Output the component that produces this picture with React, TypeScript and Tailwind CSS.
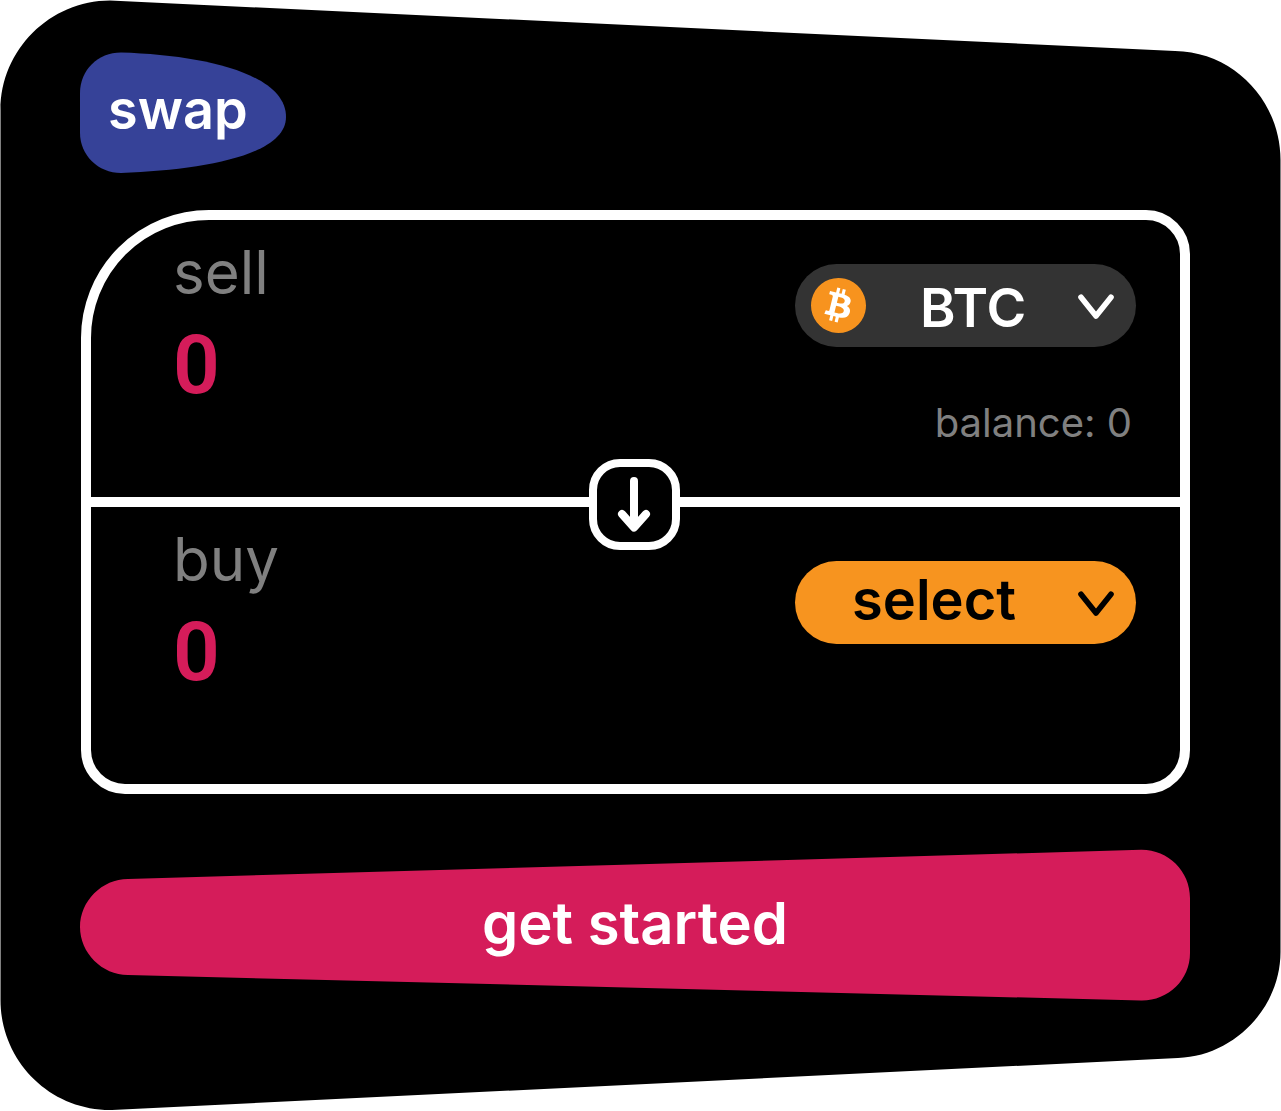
import { useState } from "react";
import type { ReactNode } from "react";
import { SiBitcoin } from "react-icons/si";

function Shape({ viewBox, d, className }: { viewBox: string; d: string; className: string }) {
  return (
    <svg
      aria-hidden="true"
      viewBox={viewBox}
      preserveAspectRatio="none"
      className={`absolute inset-0 -z-10 h-full w-full ${className}`}
    >
      <path d={d} fill="currentColor" />
    </svg>
  );
}

function Chevron() {
  return (
    <svg
      aria-hidden="true"
      viewBox="0 0 36 26"
      className="pointer-events-none absolute top-[30px] right-[22px] h-[26px] w-9"
      fill="none"
      stroke="currentColor"
      strokeWidth="5.6"
      strokeLinecap="round"
      strokeLinejoin="round"
    >
      <path d="M3 3.2 18 22 33 3.2" />
    </svg>
  );
}

function BitcoinIcon() {
  return (
    <span className="pointer-events-none absolute top-[14px] left-4 grid size-[55px] place-items-center">
      <span className="col-start-1 row-start-1 size-11 rounded-full bg-white" />
      <SiBitcoin className="col-start-1 row-start-1 size-[55px] text-[#f7931e]" />
    </span>
  );
}

function AmountField({ id, label }: { id: string; label: string }) {
  const [value, setValue] = useState("0");
  return (
    <div className="flex min-w-0 flex-1 flex-col gap-4 pt-5">
      <label htmlFor={id} className="text-[60px] leading-[64px] text-[#808080]">
        {label}
      </label>
      <input
        id={id}
        inputMode="decimal"
        value={value}
        onChange={(e) => setValue(e.target.value)}
        className="h-[90px] w-full bg-transparent font-['Roboto',sans-serif] text-[82px] leading-[90px] font-semibold text-[#d51c5a] outline-none"
      />
    </div>
  );
}

function Half({ children }: { children: ReactNode }) {
  return <div className="flex h-[277px] justify-between pr-11 pl-[82px]">{children}</div>;
}

export default function App() {
  return (
    <div className="bg-white">
      <main className="relative isolate flex flex-col pt-[52px] pr-[91px] pb-[110px] pl-20 font-['Inter',sans-serif]">
        <Shape
          viewBox="0 0 1281 1111"
          className="text-black"
          d="M.5 110C.5 50 50 .5 110 .5L1175 51C1235 52 1280.5 102 1280.5 160V952C1280.5 1008 1234 1056 1178 1058L112 1110C50 1111 .5 1061 .5 1000Z"
        />

        <h1 className="relative isolate flex h-[121px] w-[206px] items-center pb-1.5 pl-7 text-[54px] leading-[64px] font-semibold text-white">
          <Shape
            viewBox="0 0 206 121"
            className="text-[#364298]"
            d="M41 .5C125 3 206 22 206 65C206 103 125 118 41 121C18 121 0 103 0 81V41C0 18 18 .5 41 .5Z"
          />
          swap
        </h1>

        <section className="mt-[37px] ml-px rounded-[44px] rounded-tl-[128px] border-10 border-white">
          <Half>
            <AmountField id="sell" label="sell" />
            <div className="flex flex-col items-end gap-[52px] pt-11">
              <div className="relative text-white">
                <BitcoinIcon />
                <select
                  aria-label="Token to sell"
                  className="block h-[83px] w-[341px] appearance-none rounded-full bg-[#333333] pt-1 pl-[125px] text-[54px] leading-[64px] font-semibold outline-none"
                >
                  <option>BTC</option>
                </select>
                <Chevron />
              </div>
              <p className="pr-1 text-[40px] leading-[48px] text-[#808080]">balance: 0</p>
            </div>
          </Half>

          <div className="relative h-[10px] bg-white">
            <button
              type="button"
              aria-label="Switch tokens"
              className="absolute -top-[38px] left-1/2 grid size-[91px] -translate-x-[47px] place-items-center rounded-[31px] border-8 border-white bg-black text-white"
            >
              <svg
                aria-hidden="true"
                viewBox="0 0 34 58"
                className="h-[58px] w-[34px]"
                fill="none"
                stroke="currentColor"
                strokeWidth="8"
                strokeLinecap="round"
                strokeLinejoin="round"
              >
                <path d="M17 5V50M5 38 17 51.5 29 38" />
              </svg>
            </button>
          </div>

          <Half>
            <AmountField id="buy" label="buy" />
            <div className="pt-[54px]">
              <div className="relative text-black">
                <select
                  aria-label="Token to buy"
                  className="block h-[83px] w-[341px] appearance-none rounded-full bg-[#f7941f] pb-1.5 pl-[57px] text-[56px] leading-[64px] font-semibold outline-none"
                >
                  <option>select</option>
                </select>
                <Chevron />
              </div>
            </div>
          </Half>
        </section>

        <button
          type="button"
          className="relative isolate mt-[55px] h-[152px] pb-1 text-[58px] leading-[64px] font-semibold text-white"
        >
          <Shape
            viewBox="0 0 1110 152"
            className="text-[#d51c5a]"
            d="M48 30L1061 .8C1088 .5 1110 22 1110 49V104C1110 131 1088 152 1061 151.5L48 126C22 126 0 104 0 78C0 52 22 30 48 30Z"
          />
          get started
        </button>
      </main>
    </div>
  );
}
